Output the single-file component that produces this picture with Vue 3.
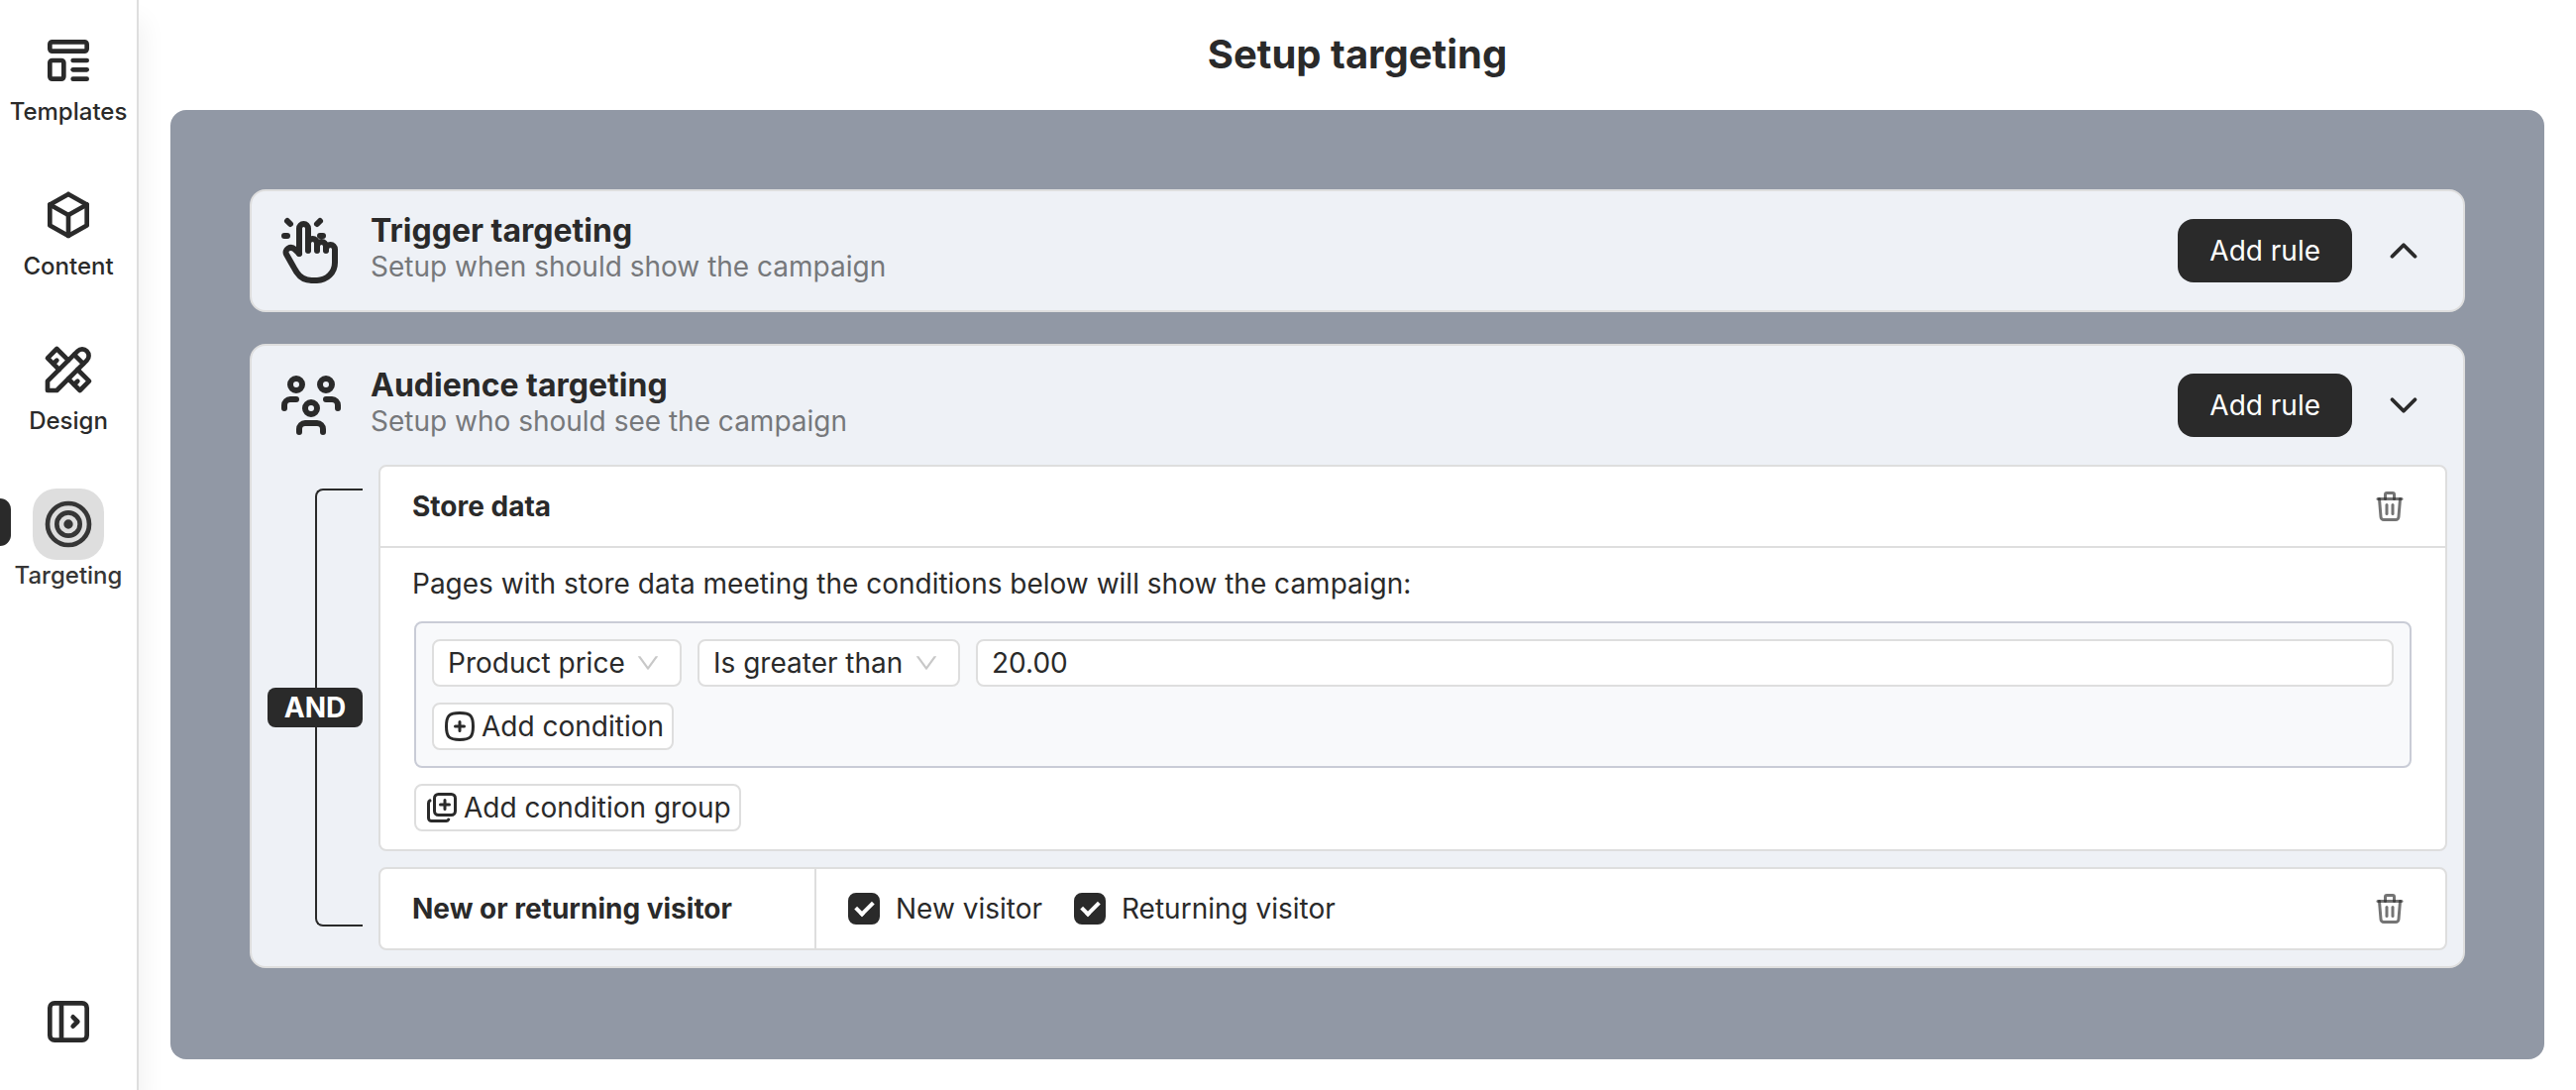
<script setup>
import { ref } from 'vue'

const icons = {
  template: [
    'M5 4h14a1 1 0 0 1 1 1v2a1 1 0 0 1 -1 1h-14a1 1 0 0 1 -1 -1v-2a1 1 0 0 1 1 -1z',
    'M5 12h4a1 1 0 0 1 1 1v6a1 1 0 0 1 -1 1h-4a1 1 0 0 1 -1 -1v-6a1 1 0 0 1 1 -1z',
    'M14 12h6', 'M14 16h6', 'M14 20h6',
  ],
  cube: ['M12 3l8 4.5v9l-8 4.5l-8 -4.5v-9l8 -4.5', 'M12 12l8 -4.5', 'M12 12v9', 'M12 12l-8 -4.5'],
  tools: [
    'M3 21h4l13 -13a1.5 1.5 0 0 0 -4 -4l-13 13v4', 'M14.5 5.5l4 4',
    'M12 8l-5 -5l-4 4l5 5', 'M7 8l-1.5 1.5', 'M16 12l5 5l-4 4l-5 -5', 'M16 17l-1.5 1.5',
  ],
  target: [
    'M11 12a1 1 0 1 0 2 0a1 1 0 1 0 -2 0',
    'M7 12a5 5 0 1 0 10 0a5 5 0 1 0 -10 0',
    'M3 12a9 9 0 1 0 18 0a9 9 0 1 0 -18 0',
  ],
  expand: [
    'M6 4h12a2 2 0 0 1 2 2v12a2 2 0 0 1 -2 2h-12a2 2 0 0 1 -2 -2v-12a2 2 0 0 1 2 -2z',
    'M9 4v16', 'M14 10l2 2l-2 2',
  ],
  hand: [
    'M8 13v-8.5a1.5 1.5 0 0 1 3 0v7.5', 'M11 11.5v-2a1.5 1.5 0 0 1 3 0v2.5',
    'M14 10.5a1.5 1.5 0 0 1 3 0v1.5',
    'M17 11.5a1.5 1.5 0 0 1 3 0v4.5a6 6 0 0 1 -6 6h-2h.208a6 6 0 0 1 -5.012 -2.7l-.196 -.3c-.312 -.479 -1.407 -2.388 -3.286 -5.728a1.5 1.5 0 0 1 .536 -2.022a1.867 1.867 0 0 1 2.28 .28l1.47 1.47',
    'M5 3l-1 -1', 'M4 7h-1', 'M14 3l1 -1', 'M15 7h1',
  ],
  users: [
    'M10 13a2 2 0 1 0 4 0a2 2 0 0 0 -4 0', 'M8 21v-1a2 2 0 0 1 2 -2h4a2 2 0 0 1 2 2v1',
    'M15 5a2 2 0 1 0 4 0a2 2 0 0 0 -4 0', 'M17 10h2a2 2 0 0 1 2 2v1',
    'M5 5a2 2 0 1 0 4 0a2 2 0 0 0 -4 0', 'M3 13v-1a2 2 0 0 1 2 -2h2',
  ],
  trash: [
    'M4 7h16', 'M10 11v6', 'M14 11v6',
    'M5 7l1 12a2 2 0 0 0 2 2h8a2 2 0 0 0 2 -2l1 -12',
    'M9 7v-3a1 1 0 0 1 1 -1h4a1 1 0 0 1 1 1v3',
  ],
}

const arrow = 'M884 256h-75c-5.1 0-9.9 2.5-12.9 6.6L512 654.2 227.9 262.6c-3-4.1-7.8-6.6-12.9-6.6h-75c-6.5 0-10.3 7.4-6.5 12.7l352.6 486.1c12.8 17.6 39 17.6 51.7 0l352.6-486.1c3.9-5.3.1-12.7-6.4-12.7z'

const nav = [
  { label: 'Templates', icon: 'template' },
  { label: 'Content', icon: 'cube' },
  { label: 'Design', icon: 'tools' },
  { label: 'Targeting', icon: 'target' },
]
const current = ref('Targeting')

const property = ref('Product price')
const operator = ref('Is greater than')
const amount = ref('20.00')
const newVisitor = ref(true)
const returningVisitor = ref(true)
</script>

<template>
  <div class="app">
    <aside class="sidebar">
      <nav class="nav">
        <a
          v-for="item in nav"
          :key="item.label"
          href="#"
          class="nav-item"
          :class="{ active: item.label === current }"
          @click.prevent="current = item.label"
        >
          <span class="nav-icon">
            <svg class="line-icon" viewBox="0 0 24 24"><path v-for="d in icons[item.icon]" :key="d" :d="d" /></svg>
          </span>
          <span class="nav-label">{{ item.label }}</span>
        </a>
      </nav>
      <button type="button" class="plain expand" aria-label="Expand sidebar">
        <svg class="line-icon" viewBox="0 0 24 24"><path v-for="d in icons.expand" :key="d" :d="d" /></svg>
      </button>
    </aside>

    <main class="main">
      <header class="page-header"><h1>Setup targeting</h1></header>

      <div class="panel">
        <section class="card">
          <header class="card-header">
            <svg class="line-icon card-icon" viewBox="0 0 24 24"><path v-for="d in icons.hand" :key="d" :d="d" /></svg>
            <div class="card-text">
              <h2>Trigger targeting</h2>
              <p>Setup when should show the campaign</p>
            </div>
            <button type="button" class="add-rule">Add rule</button>
            <button type="button" class="plain toggle" aria-label="Expand trigger targeting">
              <svg class="line-icon" viewBox="0 0 24 24"><path d="M6 15l6 -6l6 6" /></svg>
            </button>
          </header>
        </section>

        <section class="card">
          <header class="card-header">
            <svg class="line-icon card-icon" viewBox="0 0 24 24"><path v-for="d in icons.users" :key="d" :d="d" /></svg>
            <div class="card-text">
              <h2>Audience targeting</h2>
              <p>Setup who should see the campaign</p>
            </div>
            <button type="button" class="add-rule">Add rule</button>
            <button type="button" class="plain toggle" aria-label="Collapse audience targeting">
              <svg class="line-icon" viewBox="0 0 24 24"><path d="M6 9l6 6l6 -6" /></svg>
            </button>
          </header>

          <div class="rules">
            <div class="joiner">
              <span class="bracket top"></span>
              <span class="and">AND</span>
              <span class="bracket bottom"></span>
            </div>

            <div class="rule-list">
              <article class="rule">
                <header class="rule-header">
                  <h3>Store data</h3>
                  <button type="button" class="plain trash" aria-label="Delete store data rule">
                    <svg class="line-icon" viewBox="0 0 24 24"><path v-for="d in icons.trash" :key="d" :d="d" /></svg>
                  </button>
                </header>
                <div class="rule-body">
                  <p>Pages with store data meeting the conditions below will show the campaign:</p>
                  <div class="group">
                    <div class="condition">
                      <span class="select">
                        <select v-model="property" aria-label="Property"><option>Product price</option></select>
                        <svg viewBox="64 64 896 896"><path :d="arrow" /></svg>
                      </span>
                      <span class="select">
                        <select v-model="operator" aria-label="Operator"><option>Is greater than</option></select>
                        <svg viewBox="64 64 896 896"><path :d="arrow" /></svg>
                      </span>
                      <input v-model="amount" class="amount" type="text" aria-label="Value">
                    </div>
                    <button type="button" class="small-button">
                      <svg class="line-icon" viewBox="0 0 24 24">
                        <path d="M12 3c7.2 0 9 1.8 9 9s-1.8 9 -9 9s-9 -1.8 -9 -9s1.8 -9 9 -9z" />
                        <path d="M9 12h6M12 9v6" />
                      </svg>
                      <span>Add condition</span>
                    </button>
                  </div>
                  <button type="button" class="small-button">
                    <svg class="line-icon" viewBox="0 0 24 24">
                      <path d="M7 5.667a2.667 2.667 0 0 1 2.667 -2.667h8.666a2.667 2.667 0 0 1 2.667 2.667v8.666a2.667 2.667 0 0 1 -2.667 2.667h-8.666a2.667 2.667 0 0 1 -2.667 -2.667z" />
                      <path d="M4.012 7.26a2.005 2.005 0 0 0 -1.012 1.737v10c0 1.1 .9 2 2 2h10c.75 0 1.158 -.385 1.5 -1" />
                      <path d="M11 10h6M14 7v6" />
                    </svg>
                    <span>Add condition group</span>
                  </button>
                </div>
              </article>

              <article class="rule inline">
                <h3>New or returning visitor</h3>
                <div class="checks">
                  <label><input v-model="newVisitor" type="checkbox"><span>New visitor</span></label>
                  <label><input v-model="returningVisitor" type="checkbox"><span>Returning visitor</span></label>
                </div>
                <button type="button" class="plain trash" aria-label="Delete visitor rule">
                  <svg class="line-icon" viewBox="0 0 24 24"><path v-for="d in icons.trash" :key="d" :d="d" /></svg>
                </button>
              </article>
            </div>
          </div>
        </section>
      </div>
    </main>
  </div>
</template>

<style>
body {
  margin: 0;
  background: #fff;
}
</style>

<style scoped>
.app {
  display: flex;
  min-height: 100vh;
  color: #2a2a2a;
  font-family: Inter, "Liberation Sans", sans-serif;
  font-size: 28px;
  line-height: 36px;
  font-optical-sizing: none;
}
.app *, .app *::before, .app *::after { box-sizing: border-box; }
h1, h2, h3, p { margin: 0; font-size: inherit; }
button, input, select { margin: 0; font: inherit; font-optical-sizing: none; color: inherit; }
button { cursor: pointer; }
.line-icon {
  display: block;
  flex: none;
  width: 36px;
  height: 36px;
  fill: none;
  stroke: currentColor;
  stroke-width: 2;
  stroke-linecap: round;
  stroke-linejoin: round;
}
.plain {
  display: flex;
  align-items: center;
  justify-content: center;
  padding: 0;
  border: 0;
  background: none;
}

.sidebar {
  position: relative;
  z-index: 1;
  display: flex;
  flex: none;
  flex-direction: column;
  align-items: stretch;
  justify-content: space-between;
  width: 140px;
  padding: 25px 0 41px;
  border-right: 2px solid #dedede;
  background: #fff;
  box-shadow: 4px 20px 24px rgba(0, 0, 0, 0.06);
}
.nav { display: flex; flex-direction: column; gap: 52px; }
.nav-item {
  position: relative;
  display: flex;
  flex-direction: column;
  align-items: center;
  color: inherit;
  font-size: 24px;
  font-weight: 500;
  line-height: 32px;
  text-decoration: none;
}
.nav-icon {
  display: flex;
  align-items: center;
  justify-content: center;
  width: 72px;
  height: 72px;
  border-radius: 24px;
}
.nav-icon .line-icon, .expand .line-icon { width: 56px; height: 56px; }
.active { color: #363636; }
.active .nav-icon { background: #dedede; }
.active::before {
  content: "";
  position: absolute;
  top: 10px;
  left: 0;
  width: 11px;
  height: 48px;
  border-radius: 0 12px 12px 0;
  background: #2a2a2a;
}

.main {
  display: flex;
  flex: 1;
  flex-direction: column;
  min-width: 0;
  padding: 0 32px 31px;
}
.page-header {
  display: flex;
  align-items: center;
  justify-content: center;
  height: 111px;
  padding-bottom: 2px;
}
h1 { font-size: 40px; font-weight: 700; line-height: 48px; }
.panel {
  display: flex;
  flex: 1;
  flex-direction: column;
  gap: 32px;
  padding: 80px;
  border-radius: 16px;
  background: #9198a5;
}
.card {
  border: 2px solid #dedede;
  border-radius: 16px;
  background: #eef1f6;
}
.card-header {
  display: flex;
  align-items: center;
  height: 120px;
  padding: 0 36px 0 24px;
}
.card-icon { width: 72px; height: 72px; }
.card-text { flex: 1; margin-left: 24px; padding-bottom: 4px; }
h2 { font-size: 32px; font-weight: 700; line-height: 36px; }
.card-text p { color: #76787b; }
.add-rule {
  height: 64px;
  padding: 0 32px;
  border: 0;
  border-radius: 16px;
  background: #2a2a2a;
  color: #fff;
}
.toggle { width: 48px; height: 48px; margin-left: 28px; }
.toggle .line-icon { width: 46px; height: 46px; }

.rules { display: flex; gap: 16px; padding: 0 16px 16px; }
.joiner {
  display: flex;
  flex: none;
  flex-direction: column;
  width: 96px;
  padding: 24px 0;
}
.bracket {
  flex: 1;
  width: 48px;
  margin-left: auto;
  border-left: 2px solid #2a2a2a;
}
.bracket.top { border-top: 2px solid #2a2a2a; border-top-left-radius: 8px; }
.bracket.bottom { border-bottom: 2px solid #2a2a2a; border-bottom-left-radius: 8px; }
.and {
  border-radius: 8px;
  background: #2a2a2a;
  color: #fff;
  font-weight: 700;
  line-height: 40px;
  text-align: center;
}
.rule-list {
  display: flex;
  flex: 1;
  flex-direction: column;
  gap: 16px;
  min-width: 0;
}
.rule { border: 2px solid #dedede; border-radius: 8px; background: #fff; }
h3 { font-weight: 700; }
.rule-header {
  display: flex;
  align-items: center;
  justify-content: space-between;
  height: 82px;
  padding: 0 38px 0 32px;
  border-bottom: 2px solid #dedede;
}
.trash { width: 36px; height: 36px; color: rgba(42, 42, 42, 0.65); }
.rule-body {
  display: flex;
  flex-direction: column;
  align-items: flex-start;
  gap: 16px;
  padding: 18px 34px;
}
.rule-body p { margin: 0 0 4px -2px; }
.group {
  display: flex;
  flex-direction: column;
  align-items: flex-start;
  gap: 16px;
  align-self: stretch;
  padding: 16px;
  border: 2px solid #c9ccd6;
  border-radius: 8px;
  background: #f8f9fb;
}
.condition { display: flex; gap: 16px; align-self: stretch; }
.select { position: relative; flex: none; }
.select select, .amount, .small-button {
  height: 48px;
  border: 2px solid #dedede;
  border-radius: 8px;
  background: #fff;
}
.select select {
  display: block;
  padding: 0 55px 0 14px;
  appearance: none;
}
.select svg {
  position: absolute;
  top: 12px;
  right: 22px;
  width: 24px;
  height: 24px;
  fill: #c8c8c8;
  pointer-events: none;
}
.amount { flex: 1; min-width: 0; padding: 0 14px; }
.small-button {
  display: flex;
  align-items: center;
  gap: 4px;
  padding: 0 8px;
}

.inline { display: flex; align-items: center; height: 84px; padding-right: 38px; }
.inline h3 {
  display: flex;
  align-items: center;
  align-self: stretch;
  width: 440px;
  padding-left: 32px;
  border-right: 2px solid #dedede;
}
.checks { display: flex; flex: 1; gap: 32px; padding-left: 32px; }
.checks label { display: flex; align-items: center; gap: 16px; }
.checks input {
  position: relative;
  width: 32px;
  height: 32px;
  border: 2px solid #dedede;
  border-radius: 8px;
  appearance: none;
}
.checks input:checked { border-color: #2a2a2a; background: #2a2a2a; }
.checks input:checked::after {
  content: "";
  position: absolute;
  top: 3px;
  left: 9px;
  width: 11px;
  height: 18px;
  border: solid #fff;
  border-width: 0 4px 4px 0;
  transform: rotate(45deg);
}
</style>
